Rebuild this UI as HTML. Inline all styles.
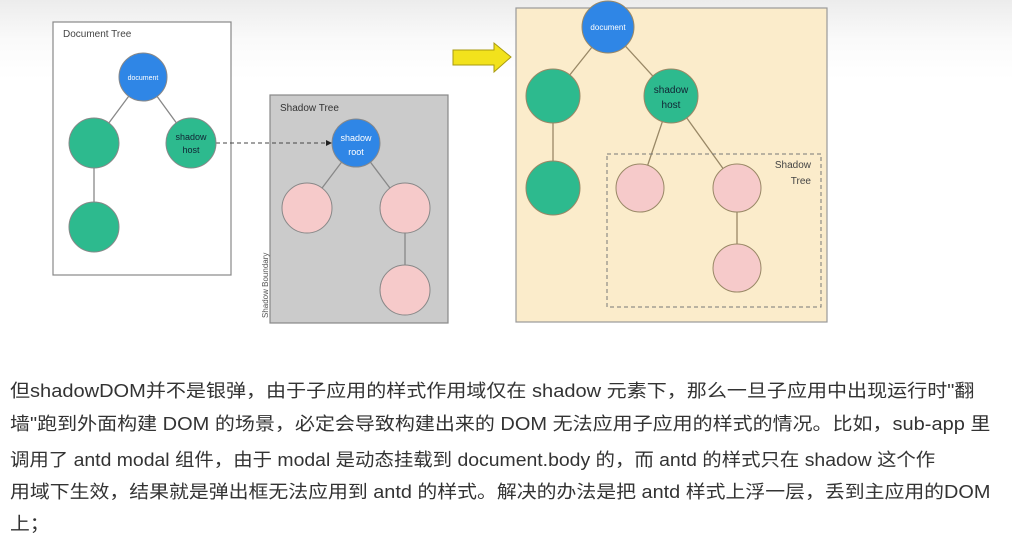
<!DOCTYPE html>
<html><head><meta charset="utf-8"><style>
html,body{margin:0;padding:0;width:1012px;height:556px;overflow:hidden;background:#fff;}
body{background:linear-gradient(#ececec 0px,#fafafa 40px,#fff 80px);}
.t{position:absolute;left:10px;font-family:"Liberation Sans","Noto Sans CJK SC",sans-serif;font-size:18px;color:#333;white-space:nowrap;transform-origin:0 50%;}
svg text{font-family:"Liberation Sans",sans-serif;}
</style></head><body>
<svg width="1012" height="340" style="position:absolute;left:0;top:0">
<rect x="53" y="22" width="178" height="253" fill="#fff" stroke="#888" stroke-width="1.2"/>
<text x="63" y="37" font-size="10" fill="#444">Document Tree</text>
<g stroke="#888" stroke-width="1.3">
<line x1="143" y1="77" x2="94" y2="143"/><line x1="143" y1="77" x2="191" y2="143"/><line x1="94" y1="143" x2="94" y2="227"/>
</g>
<rect x="270" y="95" width="178" height="228" fill="#cbcbcb" stroke="#888" stroke-width="1.2"/>
<text x="280" y="111" font-size="10" fill="#333">Shadow Tree</text>
<text transform="translate(268,318) rotate(-90)" font-size="8" fill="#555">Shadow Boundary</text>
<g stroke="#888" stroke-width="1.3">
<line x1="356" y1="143" x2="307" y2="208"/><line x1="356" y1="143" x2="405" y2="208"/><line x1="405" y1="208" x2="405" y2="290"/>
</g>
<line x1="216" y1="143" x2="328" y2="143" stroke="#444" stroke-width="1" stroke-dasharray="4,3"/>
<polygon points="332,143 326,140 326,146" fill="#222"/>
<g stroke="#888" stroke-width="1">
<circle cx="143" cy="77" r="24" fill="#2f86e6"/>
<circle cx="94" cy="143" r="25" fill="#2dba8e"/>
<circle cx="191" cy="143" r="25" fill="#2dba8e"/>
<circle cx="94" cy="227" r="25" fill="#2dba8e"/>
<circle cx="356" cy="143" r="24" fill="#2f86e6"/>
<circle cx="307" cy="208" r="25" fill="#f6caca"/>
<circle cx="405" cy="208" r="25" fill="#f6caca"/>
<circle cx="405" cy="290" r="25" fill="#f6caca"/>
</g>
<text x="143" y="80" font-size="7" fill="#fff" text-anchor="middle">document</text>
<text x="191" y="140" font-size="9" fill="#123" text-anchor="middle">shadow</text>
<text x="191" y="153" font-size="9" fill="#123" text-anchor="middle">host</text>
<text x="356" y="141" font-size="9" fill="#fff" text-anchor="middle">shadow</text>
<text x="356" y="155" font-size="9" fill="#fff" text-anchor="middle">root</text>
<polygon points="453,50 494,50 494,43 511,57 494,72 494,65 453,65" fill="#f2e21c" stroke="#a89a10" stroke-width="1"/>
<rect x="516" y="8" width="311" height="314" fill="#fbeccb" stroke="#999" stroke-width="1.2"/>
<g stroke="#998866" stroke-width="1.3">
<line x1="608" y1="27" x2="553" y2="96"/><line x1="608" y1="27" x2="671" y2="96"/><line x1="553" y1="96" x2="553" y2="188"/>
<line x1="671" y1="96" x2="640" y2="188"/><line x1="671" y1="96" x2="737" y2="188"/><line x1="737" y1="188" x2="737" y2="268"/>
</g>
<rect x="607" y="154" width="214" height="153" fill="none" stroke="#777" stroke-width="1" stroke-dasharray="4,3"/>
<text x="811" y="168" font-size="10" fill="#444" text-anchor="end">Shadow</text>
<text x="811" y="184" font-size="10" fill="#444" text-anchor="end">Tree</text>
<g stroke="#998866" stroke-width="1">
<circle cx="608" cy="27" r="26" fill="#2f86e6"/>
<circle cx="553" cy="96" r="27" fill="#2dba8e"/>
<circle cx="671" cy="96" r="27" fill="#2dba8e"/>
<circle cx="553" cy="188" r="27" fill="#2dba8e"/>
<circle cx="640" cy="188" r="24" fill="#f6caca"/>
<circle cx="737" cy="188" r="24" fill="#f6caca"/>
<circle cx="737" cy="268" r="24" fill="#f6caca"/>
</g>
<text x="608" y="30" font-size="8" fill="#fff" text-anchor="middle">document</text>
<text x="671" y="93" font-size="10" fill="#123" text-anchor="middle">shadow</text>
<text x="671" y="108" font-size="10" fill="#123" text-anchor="middle">host</text>
</svg>
<div class="t" style="top:377px;transform:scaleX(1.113)">但shadowDOM并不是银弹，由于子应用的样式作用域仅在 shadow 元素下，那么一旦子应用中出现运行时"翻</div>
<div class="t" style="top:410px;transform:scaleX(1.111)">墙"跑到外面构建 DOM 的场景，必定会导致构建出来的 DOM 无法应用子应用的样式的情况。比如，sub-app 里</div>
<div class="t" style="top:446px;transform:scaleX(1.078)">调用了 antd modal 组件，由于 modal 是动态挂载到 document.body 的，而 antd 的样式只在 shadow 这个作</div>
<div class="t" style="top:478px;transform:scaleX(1.104)">用域下生效，结果就是弹出框无法应用到 antd 的样式。解决的办法是把 antd 样式上浮一层，丢到主应用的DOM</div>
<div class="t" style="top:510px;transform:scaleX(1.1)">上；</div>
</body></html>
